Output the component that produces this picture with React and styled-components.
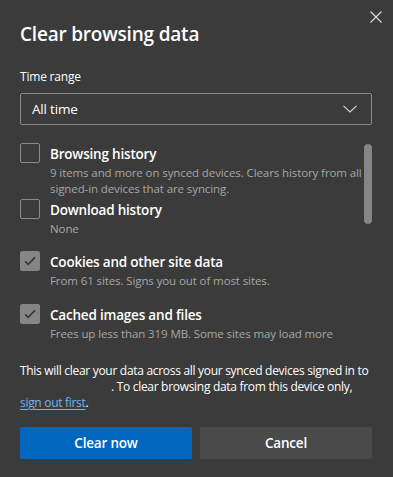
import React from 'react'
import styled, { createGlobalStyle } from 'styled-components'

const GlobalStyle = createGlobalStyle`
  html, body {
    margin: 0;
    padding: 0;
    background: #3b3b3b;
  }
  body {
    font-family: 'Open Sans', 'Noto Sans', sans-serif;
    color: #ffffff;
  }
`

const Dialog = styled.div`
  position: relative;
  width: 393px;
  height: 477px;
  box-sizing: border-box;
  padding: 19px 21px 0 20px;
  background: #3b3b3b;
  overflow: hidden;
`

const CloseButton = styled.button`
  position: absolute;
  top: 10px;
  right: 10px;
  width: 14px;
  height: 14px;
  padding: 0;
  border: none;
  background: none;
  cursor: pointer;
  display: flex;
  align-items: center;
  justify-content: center;
`

const Title = styled.h1`
  margin: 0;
  font-size: 19px;
  font-weight: 600;
  line-height: 30px;
  letter-spacing: -0.2px;
`

const Label = styled.div`
  margin-top: 20px;
  font-size: 12px;
  line-height: 16px;
  letter-spacing: -0.2px;
`

const Select = styled.div`
  margin-top: 8px;
  height: 32px;
  box-sizing: border-box;
  border: 1px solid #8a8a8a;
  border-radius: 2px;
  display: flex;
  align-items: center;
  justify-content: space-between;
  padding: 0 14px 0 11px;
  font-size: 13.5px;
  letter-spacing: -0.2px;
`

const ScrollArea = styled.div`
  position: relative;
  margin-top: 18px;
  height: 204px;
  overflow: hidden;
`

const Scrollbar = styled.div`
  position: absolute;
  top: 1px;
  right: 0;
  width: 8px;
  height: 80px;
  border-radius: 4px;
  background: #858585;
`

const List = styled.div`
  display: flex;
  flex-direction: column;
  padding-right: 10px;
`

const Item = styled.div`
  display: flex;
  gap: 10px;
  margin-bottom: ${p => p.gap}px;
`

const Box = styled.div`
  flex: none;
  width: 20px;
  height: 20px;
  box-sizing: border-box;
  border-radius: 2px;
  border: 1px solid ${p => (p.checked ? '#858585' : '#8a8a8a')};
  background: ${p => (p.checked ? '#858585' : 'transparent')};
  display: flex;
  align-items: center;
  justify-content: center;
`

const ItemText = styled.div`
  display: flex;
  flex-direction: column;
`

const ItemTitle = styled.div`
  font-size: 13.5px;
  font-weight: 600;
  line-height: 22px;
  letter-spacing: -0.2px;
`

const ItemDesc = styled.div`
  font-size: 11.5px;
  line-height: 16px;
  color: #a6a6a6;
  letter-spacing: -0.1px;
`

const Notice = styled.p`
  margin: 16px -4px 0 0;
  font-size: 12px;
  line-height: 16px;
  letter-spacing: -0.3px;
  color: #ffffff;
  white-space: nowrap;
`

const Blank = styled.span`
  display: inline-block;
  width: 91px;
`

const TextLink = styled.a`
  color: #74b4ec;
  text-decoration: underline;
  text-underline-offset: 2px;
`

const Actions = styled.div`
  display: grid;
  grid-template-columns: 1fr 1fr;
  gap: 8px;
  margin-top: 16px;
`

const Button = styled.button`
  height: 32px;
  border: none;
  border-radius: 2px;
  font-family: inherit;
  font-size: 13.5px;
  font-weight: 600;
  letter-spacing: -0.2px;
  color: #ffffff;
  background: ${p => (p.primary ? '#0067c0' : '#4a4a4a')};
  cursor: pointer;
`

const Check = () => (
  <svg width="12" height="10" viewBox="0 0 12 10">
    <path d="M1 5.2 L4.2 8.4 L11 1.4" fill="none" stroke="#363636" strokeWidth="1.6" />
  </svg>
)

const items = [
  {
    title: 'Browsing history',
    desc: ['9 items and more on synced devices. Clears history from all', 'signed-in devices that are syncing.'],
    checked: false,
    gap: 2,
  },
  { title: 'Download history', desc: ['None'], checked: false, gap: 14 },
  { title: 'Cookies and other site data', desc: ['From 61 sites. Signs you out of most sites.'], checked: true, gap: 15 },
  { title: 'Cached images and files', desc: ['Frees up less than 319 MB. Some sites may load more'], checked: true, gap: 0 },
]

export default function App() {
  return (
    <>
      <GlobalStyle />
      <Dialog>
        <CloseButton aria-label="Close">
          <svg width="12" height="12" viewBox="0 0 12 12">
            <path d="M0.5 0.5 L11.5 11.5 M11.5 0.5 L0.5 11.5" stroke="#e0e0e0" strokeWidth="1.1" />
          </svg>
        </CloseButton>
        <Title>Clear browsing data</Title>
        <Label>Time range</Label>
        <Select>
          <span>All time</span>
          <svg width="14" height="8" viewBox="0 0 14 8">
            <path d="M0.5 0.8 L7 7 L13.5 0.8" fill="none" stroke="#d8d8d8" strokeWidth="1.1" />
          </svg>
        </Select>
        <ScrollArea>
          <List>
            {items.map(item => (
              <Item key={item.title} gap={item.gap}>
                <Box checked={item.checked}>{item.checked && <Check />}</Box>
                <ItemText>
                  <ItemTitle>{item.title}</ItemTitle>
                  {item.desc.map(line => (
                    <ItemDesc key={line}>{line}</ItemDesc>
                  ))}
                </ItemText>
              </Item>
            ))}
          </List>
          <Scrollbar />
        </ScrollArea>
        <Notice>
          This will clear your data across all your synced devices signed in to
          <br />
          <Blank />. To clear browsing data from this device only,
          <br />
          <TextLink href="#">sign out first</TextLink>.
        </Notice>
        <Actions>
          <Button primary>Clear now</Button>
          <Button>Cancel</Button>
        </Actions>
      </Dialog>
    </>
  )
}
